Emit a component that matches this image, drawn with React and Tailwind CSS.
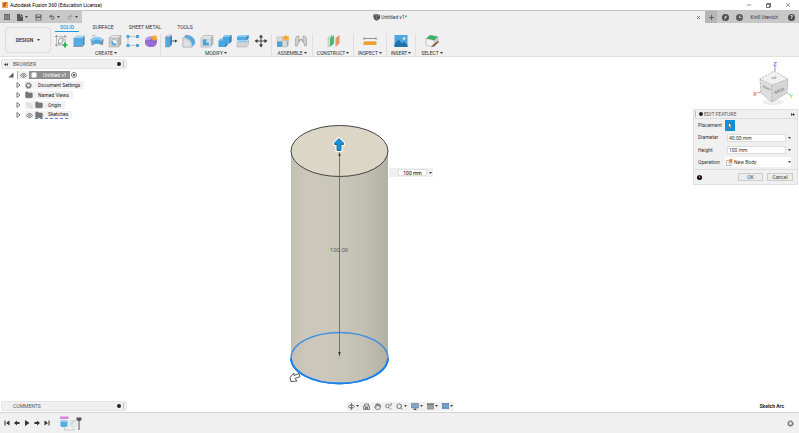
import React from 'react';
import { Eye, EyeOff, Folder, Hand, Search, Undo2, Redo2, Minus, X, Plus } from 'lucide-react';

const Caret = ({ className = '' }) => (
  <svg viewBox="0 0 6 4" className={`w-[3px] h-[2px] shrink-0 fill-[#444] ${className}`} aria-hidden="true">
    <path d="M0 0h6L3 4z" />
  </svg>
);

const Gear = ({ className = '' }) => (
  <svg viewBox="0 0 16 16" className={className} fill="none" stroke="#777" aria-hidden="true">
    <circle cx="8" cy="8" r="4.500" strokeWidth="2.600" />
    <circle cx="8" cy="8" r="6.800" strokeWidth="2" strokeDasharray="2.670 2.670" />
  </svg>
);

const Icon = ({ children }) => (
  <svg viewBox="0 0 28 28" className="w-3.5 h-3.5 block" fill="none" aria-hidden="true">{children}</svg>
);

const icons = {
  sketch: (
    <Icon>
      <path d="M5 5h17v17H5z" stroke="#9a9a9a" strokeWidth="1.3" />
      <path d="M2 5h3M5 2v3M22 2v3M25 5h-3M5 25v-3M2 22h3M9 20V13q0-5 9-5v6q-1 6-9 6" stroke="#777" strokeWidth="1.4" />
      <path d="M17 22h10M22 17v10" stroke="#1fae4b" strokeWidth="3.4" />
    </Icon>
  ),
  extrude: (
    <Icon>
      <path d="M3 8l6-5h16l-4 5z" fill="#a5d3f0" />
      <path d="M3 8h18v17H3z" fill="#55a9e0" />
      <path d="M21 8l4-5v17l-4 5z" fill="#3a87bd" />
      <path d="M3 25h18l4-5" stroke="#888" strokeWidth="1.5" />
    </Icon>
  ),
  revolve: (
    <Icon>
      <path d="M1 11q13-11 26 0l-4 11q-9-5-17 0z" fill="#51a9df" />
      <path d="M1 11q13-11 26 0l-4 3q-9-6-19 0z" fill="#8ecaf0" />
      <path d="M1 11l3 3 3 8-4 1z" fill="#a4a4a4" />
      <path d="M27 11l-4 3-1 7 4 1z" fill="#8a8a8a" />
      <path d="M4 4l5-2M9 2l2 3" stroke="#777" />
    </Icon>
  ),
  hole: (
    <Icon>
      <path d="M2 8l6-5h18l-5 5z" fill="#e9e9e9" />
      <path d="M21 8l5-5v17l-5 6z" fill="#b5b5b5" />
      <path d="M2 8h19v18H2z" fill="#d2d2d2" />
      <path d="M2 8l6-5h18v17l-5 6H2zM2 8h19v18M21 8l5-5" stroke="#999" />
      <circle cx="12" cy="17" r="6.500" fill="#f4f4f4" stroke="#888" />
      <path d="M9 12.500a5.500 5.500 0 1 0 8 7q-8 0-8-7" fill="#4aa4de" />
    </Icon>
  ),
  pattern: (
    <Icon>
      <path d="M4 23V5h18M4 23h18" stroke="#888" strokeWidth="1.2" strokeDasharray="4 1.500" />
      <path d="M1 2h6v6H1zM20 2h6v6h-6zM1 20h6v6H1zM20 20h6v6h-6z" fill="#4aa4de" />
    </Icon>
  ),
  form: (
    <Icon>
      <path d="M2 14q1-8 9-9h7q8 2 8 9v3q-2 8-9 9h-6q-9-2-9-9z" fill="#9a72da" />
      <path d="M2 13q3-8 10-8h6l-5 7q-6-1-11 1" fill="#bb9aec" />
      <path d="M2 15q10-4 24 0M12 12q3 7 0 14M18 6l-6 6M20 14q1 6-2 11" stroke="#7a55b8" />
      <path d="M21 1l2 4 4-1-2 4 2 4-4-1-2 3-2-3-4 1 2-4-2-4 4 1z" fill="#f9a620" />
    </Icon>
  ),
  pressPull: (
    <Icon>
      <path d="M3 6l5-4h7l-3 4z" fill="#e1e1e1" stroke="#999" />
      <path d="M3 6h8v20H3z" fill="#55a9e0" stroke="#7d97a7" />
      <path d="M11 6l5-4v19l-5 5z" fill="#3a8bc3" />
      <path d="M15 14h8" stroke="#333" strokeWidth="1.5" />
      <path d="M22 11l5 3-5 3z" fill="#333" />
    </Icon>
  ),
  fillet: (
    <Icon>
      <path d="M2 8l6-6q18 1 18 17l-6 7H2z" fill="#e0e0e0" stroke="#999" />
      <path d="M8 2q18 1 18 17l-6 6Q20 9 4 7z" fill="#55a9e0" />
      <path d="M2 9q16 0 17 17H2z" fill="#e0e0e0" stroke="#a5a5a5" />
    </Icon>
  ),
  shell: (
    <Icon>
      <path d="M2 8l6-5h18v17l-5 6H2z" fill="#e2e2e2" stroke="#999" />
      <path d="M21 8l5-5v17l-5 6z" fill="#b5b5b5" />
      <path d="M6 11h12v12H6z" fill="#4aa4de" />
      <path d="M12 11h6v7h-6z" fill="#b4dcf5" />
      <path d="M6 11h6v7l-6 5zM12 18h6" stroke="#7d97a7" />
    </Icon>
  ),
  combine: (
    <Icon>
      <path d="M10 6l4-4h13v13l-4 4h-4v3l-4 4H1V13l4-4h5z" fill="#4aa4de" />
      <path d="M10 6l4-4h13l-4 4zM1 13l4-4h5v4z" fill="#86c5ed" />
      <path d="M23 6l4-4v13l-4 4zM15 19h4v3l-4 4z" fill="#3284be" />
    </Icon>
  ),
  split: (
    <Icon>
      <path d="M2 6l5-4h18v7l-4 4H2z" fill="#55a9e0" />
      <path d="M2 6l5-4h18l-4 4z" fill="#8ecaf0" />
      <path d="M21 6l4-4v7l-4 4z" fill="#3a8bc3" />
      <path d="M2 17l3-2h17l3-3v9l-4 5H2z" fill="#d4d4d4" stroke="#a5a5a5" />
      <path d="M2 17l5-3h18l-4 3z" fill="#8ecaf0" />
    </Icon>
  ),
  move: (
    <Icon>
      <path d="M14 4v20M4 14h20" stroke="#333" strokeWidth="1.8" />
      <path d="M14 1l4 6h-8zM14 27l4-6h-8zM1 14l6-4v8zM27 14l-6-4v8z" fill="#333" />
    </Icon>
  ),
  component: (
    <Icon>
      <path d="M2 6h12v9H2z" fill="#dadada" stroke="#a5a5a5" />
      <path d="M2 15h11v11H2z" fill="#4aa4de" />
      <path d="M13 15l2-2h10l-3 3v10h-9z" fill="#dadada" stroke="#a5a5a5" />
      <path d="M22 15l3-3v10l-3 3z" fill="#a5a5a5" />
      <path d="M20 1l2 4 4-1-1 4 2 4-5-1-2 3-2-3-4 1 1-4-2-4 4 1z" fill="#f9a620" />
    </Icon>
  ),
  joint: (
    <Icon>
      <path d="M3 24V9q2-7 7-5v14l-3 1v5z" fill="#cfcfcf" stroke="#888" />
      <path d="M25 24V9q-2-7-7-5v14l3 1v5z" fill="#cfcfcf" stroke="#888" />
      <path d="M10 15l4-5 4 5" stroke="#666" strokeWidth="1.5" />
    </Icon>
  ),
  plane: (
    <Icon>
      <path d="M4 8l7-6v17l-7 7z" fill="#dcdcdc" stroke="#a5a5a5" />
      <path d="M8 8l8-6v17l-8 7z" fill="#4fb974" />
      <path d="M19 8l8-6v17l-8 7z" fill="#e8976c" />
    </Icon>
  ),
  measure: (
    <Icon>
      <path d="M2 6v6M26 6v6M3 9h22" stroke="#777" strokeWidth="1.6" />
      <path d="M1 15h26v7H1z" fill="#f0a02c" />
      <path d="M5 15v3M9 15v2M13 15v3M17 15v2M21 15v3" stroke="#b98029" />
    </Icon>
  ),
  image: (
    <Icon>
      <path d="M1 2h26v24H1z" fill="#4ba8e6" />
      <path d="M1 20l8-9 7 8 4-4 7 7v4H1z" fill="#2273aa" />
      <circle cx="20" cy="9" r="2.500" fill="#fff3b0" />
    </Icon>
  ),
  select: (
    <Icon>
      <path d="M2 9l8-7 16 3-7 8z" fill="#3fb169" />
      <path d="M2 9l17 4v4l-7 9-10-5z" fill="#f4f4f4" stroke="#999" />
      <path d="M19 13l7-8v9l-7 5z" fill="#d0d0d0" stroke="#aaa" />
      <path d="M26 14L16 22l-4 4 6-1 10-9z" fill="#81502c" />
    </Icon>
  ),
};

const groups = [
  { name: 'CREATE', width: 'w-[109px]', tools: ['sketch', 'extrude', 'revolve', 'hole', 'pattern', 'form'] },
  { name: 'MODIFY', width: 'w-[111px]', tools: ['pressPull', 'fillet', 'shell', 'combine', 'split', 'move'] },
  { name: 'ASSEMBLE', width: 'w-[41px]', tools: ['component', 'joint'] },
  { name: 'CONSTRUCT', width: 'w-[41px]', tools: ['plane'] },
  { name: 'INSPECT', width: 'w-[33px]', tools: ['measure'] },
  { name: 'INSERT', width: 'w-[29px]', tools: ['image'] },
  { name: 'SELECT', width: 'w-8', tools: ['select'] },
];

const tabs = [
  { name: 'SOLID', width: 'w-6' },
  { name: 'SURFACE', width: 'w-6' },
  { name: 'SHEET METAL', width: 'w-9' },
  { name: 'TOOLS', width: 'w-5' },
];

function TitleBar() {
  return (
    <header className="h-[10px] flex items-center bg-white pl-0.5 pr-2">
      <svg viewBox="0 0 12 12" className="w-1.5 h-1.5 mr-0.5" aria-hidden="true">
        <path d="M0 0h12v12H0z" fill="#f3a765" />
        <path d="M4 10V2h5M4 6h4" stroke="#8b3f0b" strokeWidth="2" fill="none" />
      </svg>
      <h1 className="text-[5px] text-black">Autodesk Fusion 360 (Education License)</h1>
      <div className="ml-auto flex items-center gap-3.5 text-[#333]">
        <button aria-label="Minimize"><Minus className="w-1.5 h-1.5" /></button>
        <button aria-label="Restore">
          <svg viewBox="0 0 12 12" className="w-[5px] h-[5px]" fill="none" stroke="#333" strokeWidth="1.8" aria-hidden="true">
            <path d="M1 3h8v8H1zM3 3V1h8v8H9" />
          </svg>
        </button>
        <button aria-label="Close"><X className="w-1.5 h-1.5" /></button>
      </div>
    </header>
  );
}

function DocumentBar() {
  return (
    <div className="h-[13px] flex border-t border-[#c4c4c4] bg-[#f0f0f0] text-[#555]">
      <div className="w-[82px] flex items-center bg-[#c8c8c8] pl-1 gap-[7px]">
        <button aria-label="Data panel">
          <svg viewBox="0 0 14 14" className="w-[6px] h-[6px] fill-[#555]" aria-hidden="true">
            <path d="M0 0h4v4H0zM5 0h4v4H5zM10 0h4v4h-4zM0 5h4v4H0zM5 5h4v4H5zM10 5h4v4h-4zM0 10h4v4H0zM5 10h4v4H5zM10 10h4v4h-4z" />
          </svg>
        </button>
        <button aria-label="File" className="flex items-center gap-0.5">
          <svg viewBox="0 0 12 14" className="w-[6px] h-[7px] fill-[#555]" aria-hidden="true"><path d="M0 0h7v5h5v9H0zM8 0l4 4H8z" /></svg>
          <Caret />
        </button>
        <button aria-label="Save">
          <svg viewBox="0 0 14 14" className="w-[7px] h-[7px]" aria-hidden="true">
            <path d="M1 1h12v12H1z" fill="#666" />
            <path d="M4 2h6v3H4zM3 8h8v4H3z" fill="#bbb" />
          </svg>
        </button>
        <button aria-label="Undo" className="flex items-center gap-0.5"><Undo2 className="w-[6px] h-[6px]" strokeWidth={4} /><Caret /></button>
        <button aria-label="Redo" className="flex items-center gap-0.5 text-[#999]"><Redo2 className="w-[6px] h-[6px]" strokeWidth={4} /><Caret /></button>
      </div>
      <div className="flex-1 flex items-center justify-center pl-0.5">
        <svg viewBox="0 0 14 14" className="w-[7px] h-[7px] mr-px" aria-hidden="true">
          <path d="M0 2l6-2 8 2v7l-7 5-5-4z" fill="#555" />
          <path d="M0 2l7 2 7-2M7 4v10" stroke="#999" fill="none" />
        </svg>
        <span className="text-[5px] text-[#333]">Untitled v1*</span>
      </div>
      <button aria-label="Close document" className="w-[9px] flex items-center"><X className="w-[5px] h-[5px]" strokeWidth={3} /></button>
      <div className="w-[94px] flex items-center bg-[#c8c8c8] pr-1">
        <button aria-label="New document" className="w-3 self-stretch flex items-center justify-center bg-[#b5b5b5]"><Plus className="w-[7px] h-[7px]" strokeWidth={3} /></button>
        <button aria-label="Extensions" className="ml-[5px]">
          <svg viewBox="0 0 14 14" className="w-[7px] h-[7px]" aria-hidden="true">
            <circle cx="7" cy="7" r="7" fill="#4c4c4c" />
            <path d="M4 9l1-3 4-3 1 2-3 3z" fill="#ddd" />
            <path d="M4 12l5-3" stroke="#ddd" />
          </svg>
        </button>
        <button aria-label="Job status" className="ml-[7px]">
          <svg viewBox="0 0 14 14" className="w-[7px] h-[7px]" aria-hidden="true">
            <circle cx="7" cy="7" r="7" fill="#5c5c5c" />
            <path d="M7 3v4h4" stroke="#ddd" strokeWidth="1.500" fill="none" />
          </svg>
        </button>
        <button className="ml-auto text-[5px] text-[#333]">Kirill Urevich</button>
        <button aria-label="Help" className="ml-2.5">
          <span className="flex w-[7px] h-[7px] items-center justify-center rounded-full bg-[#4c4c4c] text-[5px] leading-none font-bold text-white">?</span>
        </button>
      </div>
    </div>
  );
}

function Ribbon() {
  return (
    <div className="h-[34px] flex bg-[#f0f0f0] border-b border-[#e2e2e2] text-[5px]">
      <button className="w-[46px] h-[26px] mt-1 ml-[5px] mr-px flex items-center justify-center gap-1 rounded-sm border border-[#dcdcdc] font-medium text-[#222]">
        DESIGN <Caret />
      </button>
      <div>
        <nav className="flex gap-3 pl-[3px] h-[9px]">
          {tabs.map((tab, i) => (
            <button
              key={tab.name}
              className={`${tab.width} flex items-center justify-center whitespace-nowrap leading-none border-b ${
                i === 0 ? 'border-[#1b9bd8] font-medium text-[#1b9bd8]' : 'border-transparent text-[#333]'
              }`}
            >
              {tab.name}
            </button>
          ))}
        </nav>
        <div className="flex pt-0.5">
          {groups.map((group) => (
            <div key={group.name} className={`${group.width} flex flex-col items-center gap-px border-r border-[#dedede] last:border-r-0`}>
              <div className="flex gap-1">
                {group.tools.map((tool) => (
                  <button key={tool} aria-label={tool}>{icons[tool]}</button>
                ))}
              </div>
              <button className="flex items-center gap-px leading-[8px] text-[#333]">
                {group.name}<Caret />
              </button>
            </div>
          ))}
        </div>
      </div>
    </div>
  );
}

function PanelBar({ title, arrows }) {
  return (
    <div className="w-[126px] h-2.5 flex items-center rounded-xs border border-[#e4e4e4] bg-[#f0f0f0] px-0.5 text-[5px] text-[#555]">
      <span className="w-[9px] flex">
        {arrows && (
          <svg viewBox="0 0 10 8" className="w-[4px] h-[3px] fill-[#333]" aria-hidden="true"><path d="M5 0v8L0 4zM10 0v8L5 4z" /></svg>
        )}
      </span>
      {title}
      <span className="ml-auto w-1 h-1 rounded-full bg-[#222]" />
      <span className="ml-0.5 h-1.5 w-px bg-[#bbb]" />
    </div>
  );
}

const FolderIcon = () => <Folder className="w-[8px] h-[8px] fill-[#777] text-[#777]" />;

const rows = [
  { name: 'Document Settings', icon: <Gear className="w-[7px] h-[7px]" /> },
  { name: 'Named Views', icon: <FolderIcon /> },
  { name: 'Origin', icon: <FolderIcon />, eye: <EyeOff className="w-[7px] h-[7px] text-[#ccc]" /> },
  { name: 'Sketches', icon: <FolderIcon />, eye: <Eye className="w-[7px] h-[7px] text-[#777]" strokeWidth={3} />, marked: true },
];

function Browser() {
  return (
    <div>
      <PanelBar title="BROWSER" arrows />
      <ul className="pl-[7px] pt-px text-[5px] text-[#222]">
        <li className="h-2.5 flex items-center">
          <svg viewBox="0 0 12 12" className="w-[6px] h-[6px]" aria-hidden="true">
            <path d="M11 1v10H1z" fill="#555" />
          </svg>
          <span className="ml-[3px] w-px h-2 bg-[#e58fe6]" />
          <span className="h-2 flex items-center bg-[#f0f0f0] px-0.5"><Eye className="w-[7px] h-[7px] text-[#777]" strokeWidth={3} /></span>
          <span className="h-2 flex items-center gap-[6px] bg-[#8f8f8f] pl-0.5 pr-[3px] text-white">
            <span className="w-[6px] h-[6px] rounded-xs border border-[#ccc] bg-white" />
            Untitled v1
          </span>
          <span className="ml-px flex w-[6px] h-[6px] items-center justify-center rounded-full border border-[#777]">
            <span className="w-0.5 h-0.5 rounded-full bg-[#333]" />
          </span>
        </li>
        {rows.map((row) => (
          <li key={row.name} className="h-2.5 flex items-center pl-2">
            <svg viewBox="0 0 10 12" className="w-[5px] h-[6px] mr-1" fill="none" stroke="#666" strokeWidth="1.8" aria-hidden="true">
              <path d="M2 1v10l6-5z" />
            </svg>
            <span className="h-2 flex items-center bg-[#f2f2f2] pr-1">
              {row.eye && <span className="w-[10px] flex pl-px">{row.eye}</span>}
              <span className={`h-2 flex items-center ${row.marked ? 'border-b border-dashed border-[#6c86c4]' : ''}`}>
                <span className="w-[13px]">{row.icon}</span>
                {row.name}
              </span>
            </span>
          </li>
        ))}
      </ul>
    </div>
  );
}

function Cylinder() {
  return (
    <svg viewBox="280 117 120 275" className="absolute left-[280px] top-[60px] w-[120px] h-[275px]" aria-label="Cylinder">
      <defs>
        <linearGradient id="side" x1="0" x2="1" y1="0" y2="0">
          <stop offset="0" stopColor="#c3c0b3" />
          <stop offset="0.15" stopColor="#cbc8bb" />
          <stop offset="0.5" stopColor="#c9c7ba" />
          <stop offset="0.75" stopColor="#c2c0b3" />
          <stop offset="1" stopColor="#b3b1a4" />
        </linearGradient>
      </defs>
      <path d="M291 151v207a48.500 25.500 0 0 0 97 0V151z" fill="url(#side)" />
      <ellipse cx="339.500" cy="151" rx="48.500" ry="25.500" fill="#dcd6c6" stroke="#444" strokeWidth="1" />
      <ellipse cx="339.500" cy="358" rx="48.500" ry="25.500" fill="none" stroke="#4590df" strokeWidth="1.400" />
      <path d="M291 358a48.500 25.500 0 0 0 97 0" fill="none" stroke="#1780ee" strokeWidth="1.800" />
      <path d="M339.500 153v203" stroke="#6b6a64" strokeWidth="0.900" />
      <path d="M339.500 152l1.200 4h-2.400zM339.500 356l1.200-4h-2.400z" fill="#333" />
      <circle cx="339.500" cy="358" r="1.200" fill="#d4d1c4" stroke="#999" strokeWidth="0.400" />
      <text x="339" y="252" textAnchor="middle" fontSize="6" fill="#66645d">100.00</text>
      <path d="M339 138.500l4.500 4.500v1.500H341v6h-4v-6h-2.500V143z" fill="#fff" stroke="#fff" strokeWidth="3" strokeLinejoin="round" />
      <path d="M339 138.500l4.500 4.500v1.500H341v6h-4v-6h-2.500V143z" fill="#1292dc" stroke="#12567f" strokeWidth="0.800" />
      <path d="M290 377.500l4-4.500v2.500l5-2 1 3-5 2 2 2.500-6 .5z" fill="#fff" stroke="#555" strokeWidth="1" strokeLinejoin="round" />
    </svg>
  );
}

function ViewCube() {
  return (
    <svg viewBox="750 58 45 50" className="w-[45px] h-[50px] mr-0.5 font-bold" aria-label="View cube">
      <ellipse cx="772" cy="101" rx="11" ry="3" fill="#eee" />
      <path d="M774 65v5" stroke="#7777e6" strokeWidth="0.800" />
      <path d="M756 92l4-1" stroke="#e77" strokeWidth="0.800" />
      <path d="M786 92l3 2" stroke="#7d7" strokeWidth="0.800" />
      <path d="M773 70l14 8-16 6-12-6z" fill="#f1f1f1" />
      <path d="M759 78l12 6v17l-11-9z" fill="#dedede" />
      <path d="M787 78l-16 6v17l15-9z" fill="#d6d6d6" />
      <path d="M773 70l14 8-16 6-12-6zM759 78l1 14 11 9 15-9 1-14M771 84v17" fill="none" stroke="#999" strokeWidth="0.600" strokeDasharray="2.500 1" />
      <g fontSize="4" fill="#888" textAnchor="middle">
        <text transform="translate(773 78) rotate(-12)" fontSize="3">TOP</text>
        <text transform="translate(765 88) rotate(32)" fontSize="3">RIGHT</text>
        <text transform="translate(779 91) rotate(-24)">BACK</text>
      </g>
      <g fontSize="6" textAnchor="middle" className="font-normal">
        <text x="774" y="65" fill="#5b5be0">Z</text>
        <text x="754" y="95" fill="#e04848">X</text>
        <text x="790" y="97" fill="#52cf52">Y</text>
      </g>
    </svg>
  );
}

const labelCls = 'w-[27px] shrink-0';
const inputCls = 'mx-0.5 w-0 flex-1 h-2 border border-[#ddd] bg-white px-px';

function EditFeature() {
  return (
    <form
      className="w-[105px] border border-[#e0e0e0] bg-[#f0f0f0] text-[5px] text-[#333]"
      onSubmit={(e) => e.preventDefault()}
    >
      <div className="h-[9px] flex items-center border-b border-[#ddd] px-px">
        <span className="h-1.5 w-px bg-[#bbb] mr-[3px]" />
        <span className="w-1 h-1 rounded-full bg-[#222] mr-px" />
        <h2 className="text-[#555]">EDIT FEATURE</h2>
        <svg viewBox="0 0 10 8" className="ml-auto mr-px w-[4px] h-[3px] fill-[#333]" aria-hidden="true"><path d="M0 0v8l5-4zM5 0v8l5-4z" /></svg>
      </div>
      <div className="pl-1 pr-1.5 pb-px">
        <div className="h-3 flex items-center">
          <label htmlFor="placement" className={labelCls}>Placement</label>
          <button id="placement" type="button" className="w-[10px] h-[11px] flex items-center justify-center bg-[#1590d4]">
            <svg viewBox="0 0 10 14" className="w-[5px] h-[7px] fill-white stroke-[#345]" aria-hidden="true"><path d="M1 1v10l2-2 2 4 2-1-2-4h3z" /></svg>
          </button>
        </div>
        <div className="h-[13px] flex items-center">
          <label htmlFor="diameter" className={labelCls}>Diameter</label>
          <input id="diameter" defaultValue="40.00 mm" className={inputCls} />
          <Caret />
        </div>
        <div className="h-3 flex items-center">
          <label htmlFor="height" className={labelCls}>Height</label>
          <input id="height" defaultValue="100 mm" className={inputCls} />
          <Caret />
        </div>
        <div className="h-3 flex items-center">
          <label htmlFor="operation" className={labelCls}>Operation</label>
          <div className="flex-1 flex items-center h-[10px] bg-white pl-px">
            <svg viewBox="0 0 14 14" className="w-[7px] h-[7px]" aria-hidden="true">
              <path d="M1 3h9v10H1z" fill="#fff" stroke="#777" />
              <path d="M7 0h6v7l-4 1-3-3z" fill="#ef8a3c" />
              <path d="M4 6l4 4" stroke="#888" />
            </svg>
            <select id="operation" className="flex-1 appearance-none bg-transparent pl-px leading-[8px]">
              <option>New Body</option>
            </select>
            <Caret />
          </div>
        </div>
      </div>
      <div className="h-[15px] flex items-center gap-1 border-t border-[#ddd] pl-[3px] pr-1 text-[#444]">
        <span className="flex w-[5px] h-[5px] items-center justify-center rounded-full bg-black text-[4px] leading-none font-bold text-white">i</span>
        <button className="ml-auto w-[25px] h-2 border border-[#ccc] bg-[#ececec] leading-none">OK</button>
        <button type="button" className="w-[26px] h-2 border border-[#ccc] bg-[#ececec] leading-none">Cancel</button>
      </div>
    </form>
  );
}

function NavBar() {
  const item = 'flex items-center gap-px';
  return (
    <div className="h-[9px] flex items-center gap-[4px] bg-[#f0f0f0] px-px text-[#666]">
      <button aria-label="Orbit" className={item}>
        <svg viewBox="0 0 14 14" className="w-[7px] h-[7px]" fill="none" stroke="#555" strokeWidth="1.500" aria-hidden="true">
          <path d="M7 1v12M5 3l2-2 2 2M5 11l2 2 2-2" />
          <ellipse cx="7" cy="7" rx="6" ry="2.500" />
        </svg>
        <Caret />
      </button>
      <button aria-label="Look at">
        <svg viewBox="0 0 14 14" className="w-[7px] h-[7px]" fill="none" stroke="#666" strokeWidth="1.500" aria-hidden="true">
          <path d="M1 6h12v7H1zM3 6V2h8v4" />
          <path d="M4 9h6v2H4z" fill="#888" />
        </svg>
      </button>
      <button aria-label="Pan"><Hand className="w-[7px] h-[7px]" strokeWidth={3} /></button>
      <button aria-label="Zoom">
        <svg viewBox="0 0 14 14" className="w-[7px] h-[7px]" fill="none" stroke="#666" strokeWidth="1.500" aria-hidden="true">
          <circle cx="5" cy="6" r="3.500" />
          <path d="M8 9l4 4M12 1v5M10 3l2-2 2 2" />
        </svg>
      </button>
      <button aria-label="Fit" className={item}><Search className="w-[7px] h-[7px]" strokeWidth={3} /><Caret /></button>
      <button aria-label="Display settings" className={item}>
        <svg viewBox="0 0 16 14" className="w-2 h-[7px]" aria-hidden="true">
          <path d="M1 1h14v9H1z" fill="#7da5d3" stroke="#666" />
          <path d="M5 13h6M8 10v3" stroke="#555" strokeWidth="2" />
        </svg>
        <Caret />
      </button>
      <button aria-label="Grid and snaps" className={item}>
        <svg viewBox="0 0 14 14" className="w-[7px] h-[7px]" aria-hidden="true">
          <path d="M0 1h14v12H0z" fill="#999" /><path d="M0 1h14v3H0z" fill="#777" /><path d="M0 8h14" stroke="#bbb" />
        </svg>
        <Caret />
      </button>
      <button aria-label="Viewports" className={item}>
        <svg viewBox="0 0 14 12" className="w-[7px] h-[6px]" aria-hidden="true">
          <path d="M0 0h14v12H0z" fill="#6089bd" /><path d="M0 6h14M5 0v12M10 0v12" stroke="#bcd0ea" strokeWidth="0.800" />
        </svg>
        <Caret />
      </button>
    </div>
  );
}

const transport = [
  ['First', 'M1 1h2v10H1zM11 1v10L4 6z'],
  ['Step back', 'M6 1v10L0 6zM6 4h5v4H6z'],
  ['Play', 'M2 0v12l9-6z'],
  ['Step forward', 'M6 1v10l6-5zM1 4h5v4H1z'],
  ['Last', 'M9 1h2v10H9zM1 1v10l7-5z'],
];

function Timeline() {
  return (
    <footer className="h-[21px] flex items-center border-t border-[#d4d4d4] bg-[#f0f0f0] pl-1 pr-[5px]">
      <div className="flex gap-1">
        {transport.map(([name, d]) => (
          <button key={name} aria-label={name}>
            <svg viewBox="0 0 12 12" className="w-[6px] h-[6px] fill-[#333]" aria-hidden="true"><path d={d} /></svg>
          </button>
        ))}
      </div>
      <svg viewBox="0 0 48 34" className="ml-[9px] w-6 h-[17px]" aria-label="Feature history">
        <path d="M2 3h17v5H2z" fill="#df83df" />
        <path d="M3 12q7-3 14 0v11q-7 3-14 0z" fill="#54aee6" />
        <ellipse cx="10" cy="12" rx="7" ry="2" fill="#9ad0f2" />
        <path d="M23 11h11v12H23z" fill="#e8edf0" stroke="#ccc" />
        <path d="M26 20v-4q0-3 5-3" stroke="#9abfd6" strokeWidth="1.500" fill="none" />
        <path d="M11 26v4h19v-4" stroke="#bbb" strokeWidth="1.500" fill="none" />
        <path d="M35 5h10v5l-3 2h-4l-3-2z" fill="#555" />
        <path d="M40 9v21" stroke="#555" strokeWidth="2" />
      </svg>
      <button aria-label="Timeline settings" className="ml-auto"><Gear className="w-[7px] h-[7px]" /></button>
    </footer>
  );
}

export default function App() {
  return (
    <div className="min-h-screen flex flex-col overflow-hidden bg-white font-[Roboto,sans-serif] leading-none">
      <TitleBar />
      <DocumentBar />
      <Ribbon />

      {/* Modelling canvas with the floating palettes */}
      <main className="relative flex-1 flex flex-col justify-between pt-0.5 pl-px">
        <Cylinder />
        <div className="absolute left-[389px] top-[111px] h-[9px] w-11 flex items-center gap-0.5 bg-[#f0f0f0] pr-px">
          <input aria-label="Distance" defaultValue="100 mm" className="ml-[9px] w-0 flex-1 h-[7px] border border-[#e0e0e0] bg-white text-center text-[5px]" />
          <Caret />
        </div>

        <div className="relative flex justify-between">
          <Browser />
          <div className="flex flex-col items-end pr-px">
            <ViewCube />
            <EditFeature />
          </div>
        </div>

        <div className="relative grid grid-cols-[1fr_auto_1fr] items-center pb-px">
          <PanelBar title="COMMENTS" />
          <NavBar />
          <p className="pr-[15px] text-right whitespace-nowrap text-[5px] font-bold text-[#222]">Sketch Arc</p>
        </div>
      </main>

      <Timeline />
    </div>
  );
}
